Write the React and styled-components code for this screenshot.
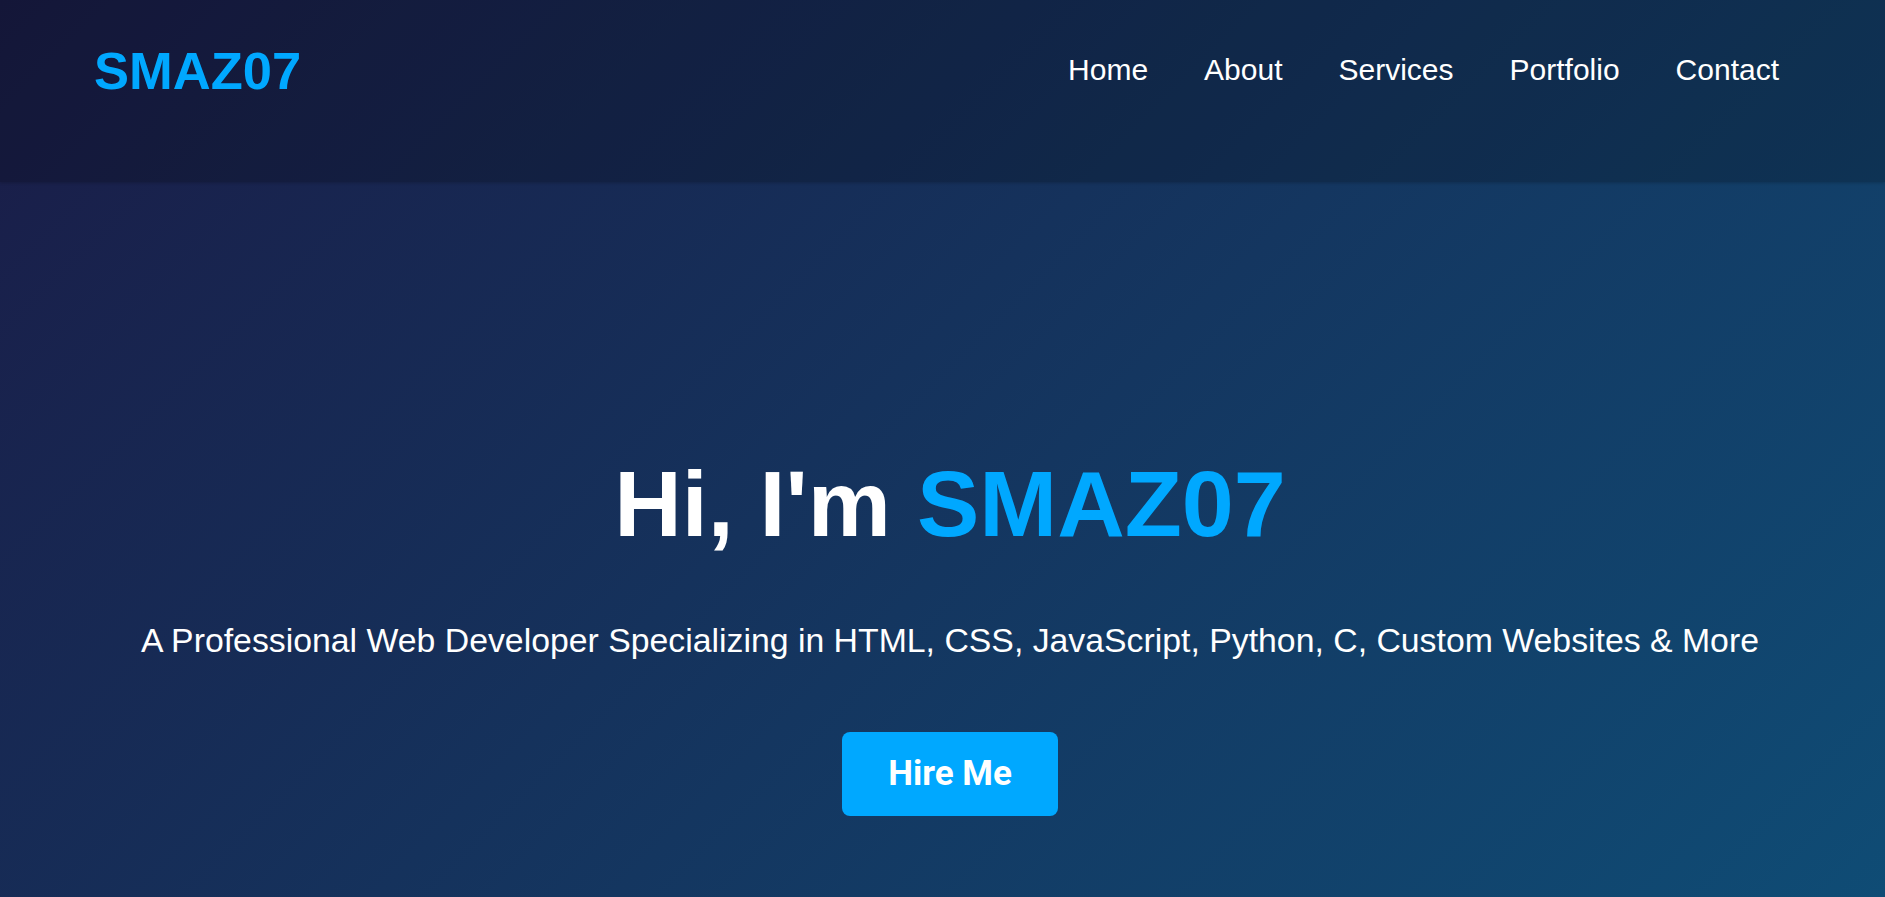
import React from "react";
import styled, { createGlobalStyle } from "styled-components";

const GlobalStyle = createGlobalStyle`
  * {
    box-sizing: border-box;
  }

  html,
  body {
    margin: 0;
    padding: 0;
  }

  body {
    font-family: "Liberation Sans", Arial, sans-serif;
    color: #fff;
    background: linear-gradient(135deg, #1a1c47 0%, #0f4c75 100%);
    min-height: 100vh;
  }
`;

const Page = styled.div`
  display: flex;
  flex-direction: column;
  min-height: 100vh;
`;

const Header = styled.header`
  position: relative;
  z-index: 2;
  display: flex;
  align-items: center;
  justify-content: space-between;
  height: 182px;
  padding: 0 106px 42px 94px;
  background: rgba(0, 0, 0, 0.2);
  box-shadow: 0 1px 3px rgba(0, 0, 0, 0.2);
`;

const Logo = styled.a`
  font-size: 52.5px;
  font-weight: 700;
  color: #00a8ff;
  text-decoration: none;
`;

const NavList = styled.ul`
  display: flex;
  gap: 56px;
  margin: 0;
  padding: 0;
  list-style: none;
`;

const NavLink = styled.a`
  font-size: 30px;
  color: #fff;
  text-decoration: none;
`;

const Hero = styled.section`
  flex: 1;
  display: flex;
  flex-direction: column;
  align-items: center;
  padding: 266px 0 0 15px;
  text-align: center;
`;

const Title = styled.h1`
  margin: 0;
  font-size: 93.5px;
  font-weight: 700;
  line-height: 1.2;
  color: #fff;

  span {
    color: #00a8ff;
  }
`;

const Subtitle = styled.p`
  margin: 60px 0 0;
  font-size: 33.8px;
  line-height: 1.2;
  color: #fff;
`;

const HireButton = styled.a`
  margin-top: 71px;
  padding: 24px 46px;
  border-radius: 8px;
  background: #00a8ff;
  color: #fff;
  font-family: Roboto, "Liberation Sans", sans-serif;
  font-size: 35px;
  font-weight: 700;
  line-height: 36px;
  text-decoration: none;
`;

const links = ["Home", "About", "Services", "Portfolio", "Contact"];

export default function App() {
  return (
    <Page>
      <GlobalStyle />
      <Header>
        <Logo href="#">SMAZ07</Logo>
        <nav>
          <NavList>
            {links.map((item) => (
              <li key={item}>
                <NavLink href={`#${item.toLowerCase()}`}>{item}</NavLink>
              </li>
            ))}
          </NavList>
        </nav>
      </Header>
      <Hero>
        <Title>
          Hi, I'm <span>SMAZ07</span>
        </Title>
        <Subtitle>
          A Professional Web Developer Specializing in HTML, CSS, JavaScript,
          Python, C, Custom Websites &amp; More
        </Subtitle>
        <HireButton href="#contact">Hire Me</HireButton>
      </Hero>
    </Page>
  );
}
